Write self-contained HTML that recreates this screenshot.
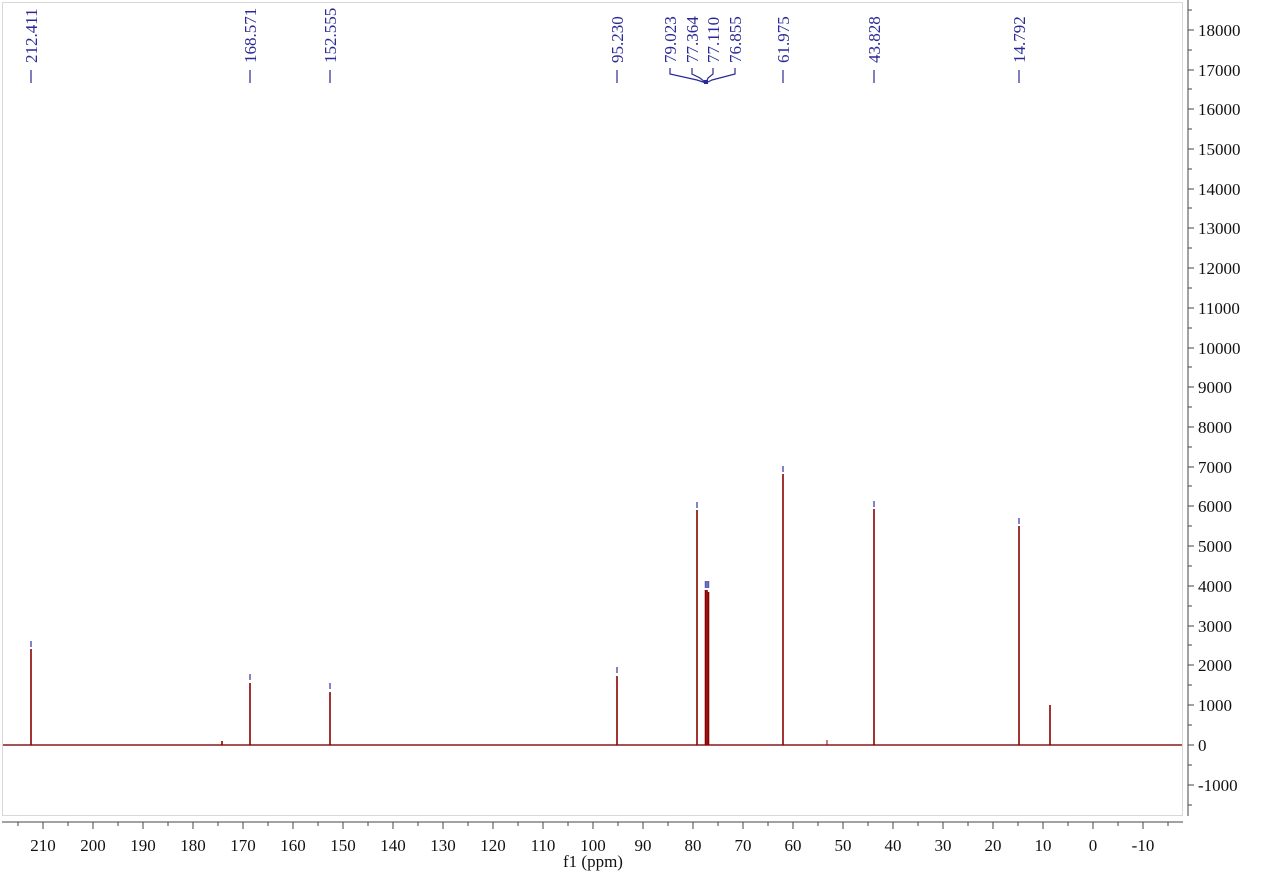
<!DOCTYPE html>
<html><head><meta charset="utf-8"><style>
html,body{margin:0;padding:0;background:#fff;}
svg{display:block;font-family:"Liberation Serif",serif;}
</style></head><body>
<svg width="1270" height="875" viewBox="0 0 1270 875" xmlns="http://www.w3.org/2000/svg">
<rect x="2.5" y="2.5" width="1180" height="813" fill="#fff" stroke="#d8d8d8" stroke-width="1"/>
<line x1="3" y1="745" x2="1182" y2="745" stroke="#8b1a1a" stroke-width="1.5"/>
<g stroke="#8b0000" stroke-width="1.6" fill="none">
<line x1="31" y1="745" x2="31" y2="649"/>
<line x1="250" y1="745" x2="250" y2="683"/>
<line x1="330" y1="745" x2="330" y2="692"/>
<line x1="617" y1="745" x2="617" y2="676"/>
<line x1="697" y1="745" x2="697" y2="510"/>
<line x1="705.5" y1="745" x2="705.5" y2="590"/>
<line x1="707" y1="745" x2="707" y2="590"/>
<line x1="708.5" y1="745" x2="708.5" y2="592"/>
<line x1="783" y1="745" x2="783" y2="474"/>
<line x1="874" y1="745" x2="874" y2="509"/>
<line x1="1019" y1="745" x2="1019" y2="526"/>
<line x1="1050" y1="745" x2="1050" y2="705"/>
<line x1="222" y1="745" x2="222" y2="741"/>
<line x1="827" y1="745" x2="827" y2="740" stroke-width="1"/>
</g>
<g stroke="#5a5ab0" stroke-width="1.5">
<line x1="31" y1="641" x2="31" y2="647"/>
<line x1="250" y1="674" x2="250" y2="680"/>
<line x1="330" y1="683" x2="330" y2="689"/>
<line x1="617" y1="667" x2="617" y2="673"/>
<line x1="697" y1="502" x2="697" y2="508"/>
<line x1="705.5" y1="581" x2="705.5" y2="588"/>
<line x1="707" y1="581" x2="707" y2="588"/>
<line x1="708.5" y1="581" x2="708.5" y2="588"/>
<line x1="783" y1="466" x2="783" y2="472"/>
<line x1="874" y1="501" x2="874" y2="507"/>
<line x1="1019" y1="518" x2="1019" y2="524"/>
</g>
<g fill="#2a2a96" font-size="17" stroke="none">
<text transform="translate(37,63) rotate(-90)">212.411</text>
<text transform="translate(256,63) rotate(-90)">168.571</text>
<text transform="translate(336,63) rotate(-90)">152.555</text>
<text transform="translate(623,63) rotate(-90)">95.230</text>
<text transform="translate(676,63) rotate(-90)">79.023</text>
<text transform="translate(698,63) rotate(-90)">77.364</text>
<text transform="translate(719,63) rotate(-90)">77.110</text>
<text transform="translate(741,63) rotate(-90)">76.855</text>
<text transform="translate(789,63) rotate(-90)">61.975</text>
<text transform="translate(880,63) rotate(-90)">43.828</text>
<text transform="translate(1025,63) rotate(-90)">14.792</text>
</g>
<g stroke="#2a2a96" stroke-width="1.2" fill="none">
<line x1="31" y1="70" x2="31" y2="83"/>
<line x1="250" y1="70" x2="250" y2="83"/>
<line x1="330" y1="70" x2="330" y2="83"/>
<line x1="617" y1="70" x2="617" y2="83"/>
<line x1="783" y1="70" x2="783" y2="83"/>
<line x1="874" y1="70" x2="874" y2="83"/>
<line x1="1019" y1="70" x2="1019" y2="83"/>
<polyline points="670,68 670,74 697,80 706,83"/>
<polyline points="692,68 692,74 700,78 706,83"/>
<polyline points="713,68 713,74 708,78 706,83"/>
<polyline points="735,68 735,74 712,80 706,83"/>
</g>
<rect x="704" y="80" width="4" height="4" fill="#2a2a96"/>
<line x1="1188" y1="0" x2="1188" y2="816" stroke="#444" stroke-width="1"/>
<g stroke="#444" stroke-width="1">
<line x1="1188" y1="30" x2="1194" y2="30"/><line x1="1188" y1="10" x2="1192" y2="10"/>
<line x1="1188" y1="70" x2="1194" y2="70"/><line x1="1188" y1="50" x2="1192" y2="50"/>
<line x1="1188" y1="109" x2="1194" y2="109"/><line x1="1188" y1="89" x2="1192" y2="89"/>
<line x1="1188" y1="149" x2="1194" y2="149"/><line x1="1188" y1="129" x2="1192" y2="129"/>
<line x1="1188" y1="189" x2="1194" y2="189"/><line x1="1188" y1="169" x2="1192" y2="169"/>
<line x1="1188" y1="228" x2="1194" y2="228"/><line x1="1188" y1="208" x2="1192" y2="208"/>
<line x1="1188" y1="268" x2="1194" y2="268"/><line x1="1188" y1="248" x2="1192" y2="248"/>
<line x1="1188" y1="308" x2="1194" y2="308"/><line x1="1188" y1="288" x2="1192" y2="288"/>
<line x1="1188" y1="348" x2="1194" y2="348"/><line x1="1188" y1="328" x2="1192" y2="328"/>
<line x1="1188" y1="387" x2="1194" y2="387"/><line x1="1188" y1="367" x2="1192" y2="367"/>
<line x1="1188" y1="427" x2="1194" y2="427"/><line x1="1188" y1="407" x2="1192" y2="407"/>
<line x1="1188" y1="467" x2="1194" y2="467"/><line x1="1188" y1="447" x2="1192" y2="447"/>
<line x1="1188" y1="506" x2="1194" y2="506"/><line x1="1188" y1="486" x2="1192" y2="486"/>
<line x1="1188" y1="546" x2="1194" y2="546"/><line x1="1188" y1="526" x2="1192" y2="526"/>
<line x1="1188" y1="586" x2="1194" y2="586"/><line x1="1188" y1="566" x2="1192" y2="566"/>
<line x1="1188" y1="626" x2="1194" y2="626"/><line x1="1188" y1="606" x2="1192" y2="606"/>
<line x1="1188" y1="665" x2="1194" y2="665"/><line x1="1188" y1="645" x2="1192" y2="645"/>
<line x1="1188" y1="705" x2="1194" y2="705"/><line x1="1188" y1="685" x2="1192" y2="685"/>
<line x1="1188" y1="745" x2="1194" y2="745"/><line x1="1188" y1="725" x2="1192" y2="725"/>
<line x1="1188" y1="785" x2="1194" y2="785"/><line x1="1188" y1="765" x2="1192" y2="765"/>
<line x1="1188" y1="805" x2="1192" y2="805"/>
</g>
<g font-size="17" fill="#111">
<text x="1198" y="36">18000</text><text x="1198" y="76">17000</text><text x="1198" y="115">16000</text>
<text x="1198" y="155">15000</text><text x="1198" y="195">14000</text><text x="1198" y="234">13000</text>
<text x="1198" y="274">12000</text><text x="1198" y="314">11000</text><text x="1198" y="354">10000</text>
<text x="1198" y="393">9000</text><text x="1198" y="433">8000</text><text x="1198" y="473">7000</text>
<text x="1198" y="512">6000</text><text x="1198" y="552">5000</text><text x="1198" y="592">4000</text>
<text x="1198" y="632">3000</text><text x="1198" y="671">2000</text><text x="1198" y="711">1000</text>
<text x="1198" y="751">0</text><text x="1198" y="791">-1000</text>
</g>
<line x1="2" y1="822" x2="1183" y2="822" stroke="#444" stroke-width="1"/>
<g stroke="#444" stroke-width="1">
<line x1="18" y1="822" x2="18" y2="826"/>
<line x1="43" y1="822" x2="43" y2="829"/><line x1="68" y1="822" x2="68" y2="826"/>
<line x1="93" y1="822" x2="93" y2="829"/><line x1="118" y1="822" x2="118" y2="826"/>
<line x1="143" y1="822" x2="143" y2="829"/><line x1="168" y1="822" x2="168" y2="826"/>
<line x1="193" y1="822" x2="193" y2="829"/><line x1="218" y1="822" x2="218" y2="826"/>
<line x1="243" y1="822" x2="243" y2="829"/><line x1="268" y1="822" x2="268" y2="826"/>
<line x1="293" y1="822" x2="293" y2="829"/><line x1="318" y1="822" x2="318" y2="826"/>
<line x1="343" y1="822" x2="343" y2="829"/><line x1="368" y1="822" x2="368" y2="826"/>
<line x1="393" y1="822" x2="393" y2="829"/><line x1="418" y1="822" x2="418" y2="826"/>
<line x1="443" y1="822" x2="443" y2="829"/><line x1="468" y1="822" x2="468" y2="826"/>
<line x1="493" y1="822" x2="493" y2="829"/><line x1="518" y1="822" x2="518" y2="826"/>
<line x1="543" y1="822" x2="543" y2="829"/><line x1="568" y1="822" x2="568" y2="826"/>
<line x1="593" y1="822" x2="593" y2="829"/><line x1="618" y1="822" x2="618" y2="826"/>
<line x1="643" y1="822" x2="643" y2="829"/><line x1="668" y1="822" x2="668" y2="826"/>
<line x1="693" y1="822" x2="693" y2="829"/><line x1="718" y1="822" x2="718" y2="826"/>
<line x1="743" y1="822" x2="743" y2="829"/><line x1="768" y1="822" x2="768" y2="826"/>
<line x1="793" y1="822" x2="793" y2="829"/><line x1="818" y1="822" x2="818" y2="826"/>
<line x1="843" y1="822" x2="843" y2="829"/><line x1="868" y1="822" x2="868" y2="826"/>
<line x1="893" y1="822" x2="893" y2="829"/><line x1="918" y1="822" x2="918" y2="826"/>
<line x1="943" y1="822" x2="943" y2="829"/><line x1="968" y1="822" x2="968" y2="826"/>
<line x1="993" y1="822" x2="993" y2="829"/><line x1="1018" y1="822" x2="1018" y2="826"/>
<line x1="1043" y1="822" x2="1043" y2="829"/><line x1="1068" y1="822" x2="1068" y2="826"/>
<line x1="1093" y1="822" x2="1093" y2="829"/><line x1="1118" y1="822" x2="1118" y2="826"/>
<line x1="1143" y1="822" x2="1143" y2="829"/><line x1="1168" y1="822" x2="1168" y2="826"/>
</g>
<g font-size="17" fill="#111" text-anchor="middle">
<text x="43" y="851">210</text><text x="93" y="851">200</text><text x="143" y="851">190</text>
<text x="193" y="851">180</text><text x="243" y="851">170</text><text x="293" y="851">160</text>
<text x="343" y="851">150</text><text x="393" y="851">140</text><text x="443" y="851">130</text>
<text x="493" y="851">120</text><text x="543" y="851">110</text><text x="593" y="851">100</text>
<text x="643" y="851">90</text><text x="693" y="851">80</text><text x="743" y="851">70</text>
<text x="793" y="851">60</text><text x="843" y="851">50</text><text x="893" y="851">40</text>
<text x="943" y="851">30</text><text x="993" y="851">20</text><text x="1043" y="851">10</text>
<text x="1093" y="851">0</text><text x="1143" y="851">-10</text>
<text x="593" y="867">f1 (ppm)</text>
</g>
</svg>
</body></html>
